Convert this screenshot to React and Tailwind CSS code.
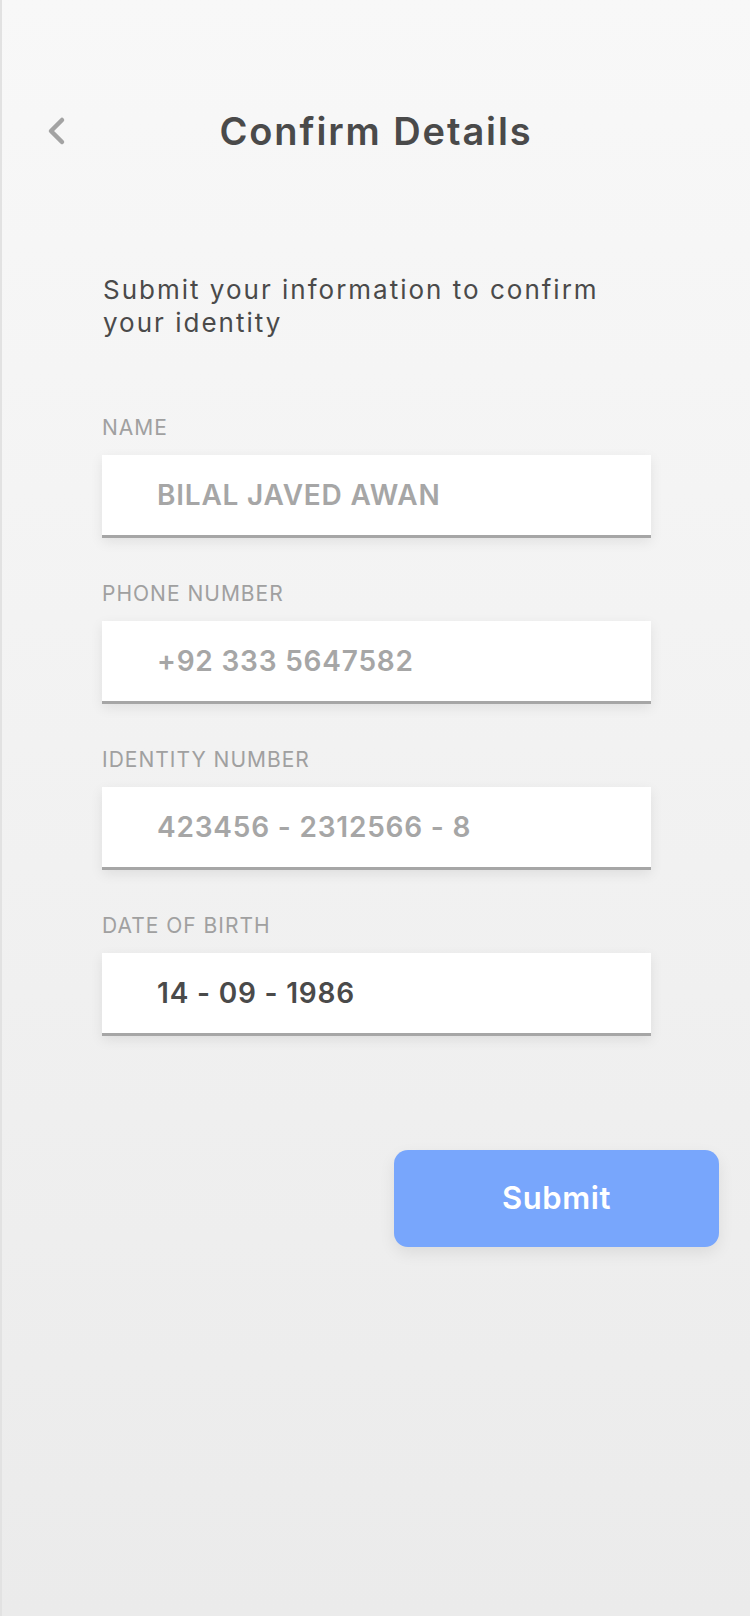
import React from "react";

const FIELDS = [
  { label: "NAME", value: "BILAL JAVED AWAN", filled: false },
  { label: "PHONE NUMBER", value: "+92 333 5647582", filled: false },
  { label: "IDENTITY NUMBER", value: "423456 - 2312566 - 8", filled: false },
  { label: "DATE OF BIRTH", value: "14 - 09 - 1986", filled: true },
];

function BackIcon() {
  return (
    <svg width="24" height="30" viewBox="0 0 24 30" fill="none">
      <path
        d="M18 4 L7 15 L18 26"
        stroke="#a3a3a3"
        strokeWidth="4.5"
        strokeLinecap="round"
        strokeLinejoin="round"
      />
    </svg>
  );
}

function Field({ label, value, filled }) {
  return (
    <div className="flex flex-col">
      <span className="text-[21px] leading-[24px] text-[#a0a0a0] tracking-[1px] mb-[15px]">
        {label}
      </span>
      <div className="h-[83px] bg-white border-b-[3px] border-[#a6a6a6] shadow-[0_4px_12px_rgba(0,0,0,0.08)] flex items-center pl-[55px]">
        <span
          className={
            filled
              ? "text-[28px] font-semibold text-[#4a4a4a] tracking-[0.8px]"
              : "text-[28px] font-semibold text-[#a6a6a6] tracking-[0.8px]"
          }
        >
          {value}
        </span>
      </div>
    </div>
  );
}

export default function App() {
  return (
    <div
      className="w-[750px] h-[1616px] border-l-2 border-[#e2e2e2] bg-gradient-to-b from-[#f8f8f8] to-[#ebebeb] flex flex-col"
      style={{ fontFamily: "Inter, 'Noto Sans', sans-serif" }}
    >
      <header className="mt-[100px] h-[62px] grid grid-cols-[1fr_auto_1fr] items-center">
        <div className="pl-[42px] flex items-center">
          <BackIcon />
        </div>
        <h1 className="text-[38px] font-semibold text-[#4a4a4a] tracking-[1.9px]">
          Confirm Details
        </h1>
        <div />
      </header>

      <p className="mt-[111px] ml-[101px] w-[520px] text-[26px] leading-[33px] text-[#4a4a4a] tracking-[2px]">
        Submit your information to confirm your identity
      </p>

      <div className="mt-[77px] ml-[100px] w-[549px] flex flex-col gap-[44px]">
        {FIELDS.map((f) => (
          <Field key={f.label} {...f} />
        ))}
      </div>

      <div className="mt-[114px] flex justify-end pr-[31px]">
        <button className="w-[325px] h-[97px] rounded-[14px] bg-[#78a6fc] text-white text-[31px] font-semibold tracking-[0.6px] shadow-[0_6px_16px_rgba(0,0,0,0.08)]">
          Submit
        </button>
      </div>
    </div>
  );
}
